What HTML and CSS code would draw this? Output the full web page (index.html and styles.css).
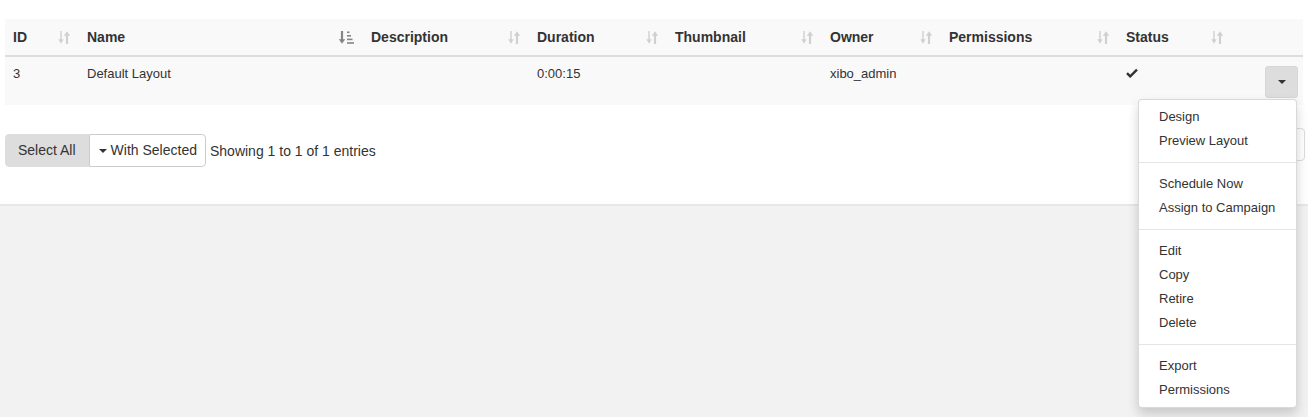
FILE: index.html
```html
<!DOCTYPE html>
<html>
<head>
<meta charset="utf-8">
<link rel="stylesheet" href="styles.css">
</head>
<body>
<div class="panel">
  <table class="grid">
    <colgroup>
      <col class="c-id"><col class="c-name"><col class="c-desc"><col class="c-dur"><col class="c-thumb"><col class="c-owner"><col class="c-perm"><col class="c-status"><col class="c-act">
    </colgroup>
    <thead>
      <tr>
        <th><div class="th-in"><span>ID</span><svg class="sort" viewBox="0 0 12 13"><path d="M3 0v9" stroke="currentColor" stroke-width="1.4"/><path d="M0.3 8.3h5.4L3 12.8z" fill="currentColor"/><path d="M9 4v9" stroke="currentColor" stroke-width="2.2"/><path d="M5.8 4.7h6.4L9 0.2z" fill="currentColor"/></svg></div></th>
        <th><div class="th-in"><span>Name</span><svg class="sort sorted" viewBox="0 0 15 13"><path d="M3 0v9" stroke="currentColor" stroke-width="2.2"/><path d="M-0.2 8.3h6.4L3 12.8z" fill="currentColor"/><rect x="8" y="0.5" width="2.5" height="1.6" fill="currentColor"/><rect x="8" y="4" width="4" height="1.6" fill="currentColor"/><rect x="8" y="7.6" width="5.5" height="1.6" fill="currentColor"/><rect x="8" y="11.2" width="7" height="1.6" fill="currentColor"/></svg></div></th>
        <th><div class="th-in"><span>Description</span><svg class="sort" viewBox="0 0 12 13"><path d="M3 0v9" stroke="currentColor" stroke-width="1.4"/><path d="M0.3 8.3h5.4L3 12.8z" fill="currentColor"/><path d="M9 4v9" stroke="currentColor" stroke-width="2.2"/><path d="M5.8 4.7h6.4L9 0.2z" fill="currentColor"/></svg></div></th>
        <th><div class="th-in"><span>Duration</span><svg class="sort" viewBox="0 0 12 13"><path d="M3 0v9" stroke="currentColor" stroke-width="1.4"/><path d="M0.3 8.3h5.4L3 12.8z" fill="currentColor"/><path d="M9 4v9" stroke="currentColor" stroke-width="2.2"/><path d="M5.8 4.7h6.4L9 0.2z" fill="currentColor"/></svg></div></th>
        <th><div class="th-in"><span>Thumbnail</span><svg class="sort" viewBox="0 0 12 13"><path d="M3 0v9" stroke="currentColor" stroke-width="1.4"/><path d="M0.3 8.3h5.4L3 12.8z" fill="currentColor"/><path d="M9 4v9" stroke="currentColor" stroke-width="2.2"/><path d="M5.8 4.7h6.4L9 0.2z" fill="currentColor"/></svg></div></th>
        <th><div class="th-in"><span>Owner</span><svg class="sort" viewBox="0 0 12 13"><path d="M3 0v9" stroke="currentColor" stroke-width="1.4"/><path d="M0.3 8.3h5.4L3 12.8z" fill="currentColor"/><path d="M9 4v9" stroke="currentColor" stroke-width="2.2"/><path d="M5.8 4.7h6.4L9 0.2z" fill="currentColor"/></svg></div></th>
        <th><div class="th-in"><span>Permissions</span><svg class="sort" viewBox="0 0 12 13"><path d="M3 0v9" stroke="currentColor" stroke-width="1.4"/><path d="M0.3 8.3h5.4L3 12.8z" fill="currentColor"/><path d="M9 4v9" stroke="currentColor" stroke-width="2.2"/><path d="M5.8 4.7h6.4L9 0.2z" fill="currentColor"/></svg></div></th>
        <th><div class="th-in"><span>Status</span><svg class="sort" viewBox="0 0 12 13"><path d="M3 0v9" stroke="currentColor" stroke-width="1.4"/><path d="M0.3 8.3h5.4L3 12.8z" fill="currentColor"/><path d="M9 4v9" stroke="currentColor" stroke-width="2.2"/><path d="M5.8 4.7h6.4L9 0.2z" fill="currentColor"/></svg></div></th>
        <th></th>
      </tr>
    </thead>
    <tbody>
      <tr>
        <td>3</td>
        <td>Default Layout</td>
        <td></td>
        <td>0:00:15</td>
        <td></td>
        <td>xibo_admin</td>
        <td></td>
        <td><svg class="check" viewBox="0 0 12 10"><path d="M1 5.2l3.2 3.2L11 1.6" fill="none" stroke="currentColor" stroke-width="2.4"/></svg></td>
        <td class="act">
          <div class="act-wrap">
            <button class="act-btn"><span class="caret"></span></button>
            <ul class="menu">
              <li>Design</li>
              <li>Preview Layout</li>
              <li class="divider"></li>
              <li>Schedule Now</li>
              <li>Assign to Campaign</li>
              <li class="divider"></li>
              <li>Edit</li>
              <li>Copy</li>
              <li>Retire</li>
              <li>Delete</li>
              <li class="divider"></li>
              <li>Export</li>
              <li>Permissions</li>
            </ul>
          </div>
        </td>
      </tr>
    </tbody>
  </table>
  <div class="controls">
    <div class="left">
      <div class="btn-group">
        <button class="btn btn-gray">Select All</button>
        <button class="btn btn-white"><span class="caret"></span>With Selected</button>
      </div>
      <span class="info">Showing 1 to 1 of 1 entries</span>
    </div>
    <div class="pager"></div>
  </div>
</div>
</body>
</html>
```
FILE: styles.css
```css
html, body {
  margin: 0;
  padding: 0;
}
body {
  background: #f2f2f2;
  font-family: "Liberation Sans", Arial, sans-serif;
  font-size: 14px;
  color: #333;
  height: 417px;
  overflow: hidden;
}
.panel {
  background: #fff;
  padding: 19px 5px 37px;
  border-bottom: 2px solid #e8e8e8;
}
.grid {
  width: 1298px;
  border-collapse: collapse;
  table-layout: fixed;
  background: #f9f9f9;
}
.c-id { width: 74px; }
.c-name { width: 284px; }
.c-desc { width: 166px; }
.c-dur { width: 138px; }
.c-thumb { width: 155px; }
.c-owner { width: 119px; }
.c-perm { width: 177px; }
.c-status { width: 114px; }
.c-act { width: 71px; }
.grid th {
  text-align: left;
  font-weight: bold;
  font-size: 14px;
  line-height: 20px;
  padding: 8px 9px 8px 8px;
  border-bottom: 2px solid #ddd;
}
.th-in {
  display: flex;
  justify-content: space-between;
  align-items: center;
}
.sort {
  width: 12px;
  height: 13px;
  color: #d0d0d0;
  display: block;
}
.sort.sorted {
  width: 15px;
  color: #858585;
}
.grid td {
  font-size: 13px;
  line-height: 18px;
  padding: 8px 8px 4px 8px;
  vertical-align: top;
}
.check {
  width: 12px;
  height: 10px;
  color: #333;
  display: block;
  margin-top: 3px;
}
.grid td.act {
  padding: 9px 5px 7px 8px;
}
.act-wrap {
  position: relative;
  display: flex;
  justify-content: flex-end;
}
.act-btn {
  width: 33px;
  height: 32px;
  background: #ddd;
  border: 1px solid #d6d6d6;
  border-radius: 3px;
  padding: 0;
  display: flex;
  align-items: center;
  justify-content: center;
}
.caret {
  display: inline-block;
  width: 0;
  height: 0;
  border-left: 4px solid transparent;
  border-right: 4px solid transparent;
  border-top: 4px solid #333;
}
.menu {
  position: absolute;
  right: 1px;
  top: 33px;
  width: 157px;
  margin: 0;
  padding: 5px 0;
  list-style: none;
  background: #fff;
  border: 1px solid rgba(0, 0, 0, 0.15);
  border-radius: 4px;
  box-shadow: 0 6px 12px rgba(0, 0, 0, 0.175);
  z-index: 10;
}
.menu li {
  font-size: 13px;
  line-height: 18px;
  padding: 3px 20px;
  color: #333;
  white-space: nowrap;
}
.menu li.divider {
  height: 1px;
  padding: 0;
  margin: 9px 0;
  background: #e5e5e5;
}
.controls {
  margin-top: 23px;
  display: flex;
  justify-content: space-between;
  align-items: flex-start;
  margin-right: -2px;
}
.left {
  display: flex;
  align-items: center;
  margin-top: 6px;
}
.btn-group {
  display: flex;
}
.btn {
  font-family: "Liberation Sans", Arial, sans-serif;
  font-size: 14px;
  line-height: 19px;
  color: #333;
  margin: 0;
  height: 33px;
}
.btn-gray {
  background: #ddd;
  border: 1px solid #ddd;
  border-radius: 4px 0 0 4px;
  padding: 6px 12px;
}
.btn-white {
  background: #fff;
  border: 1px solid #ccc;
  border-radius: 0 4px 4px 0;
  padding: 6px 8px;
  display: flex;
  align-items: center;
}
.btn-white .caret {
  margin: 0 4px 0 1px;
}
.info {
  margin-left: 4px;
  font-size: 14px;
  line-height: 20px;
}
.pager {
  width: 120px;
  height: 31px;
  border: 1px solid #ddd;
  border-radius: 4px;
  background: #fff;
}
```
